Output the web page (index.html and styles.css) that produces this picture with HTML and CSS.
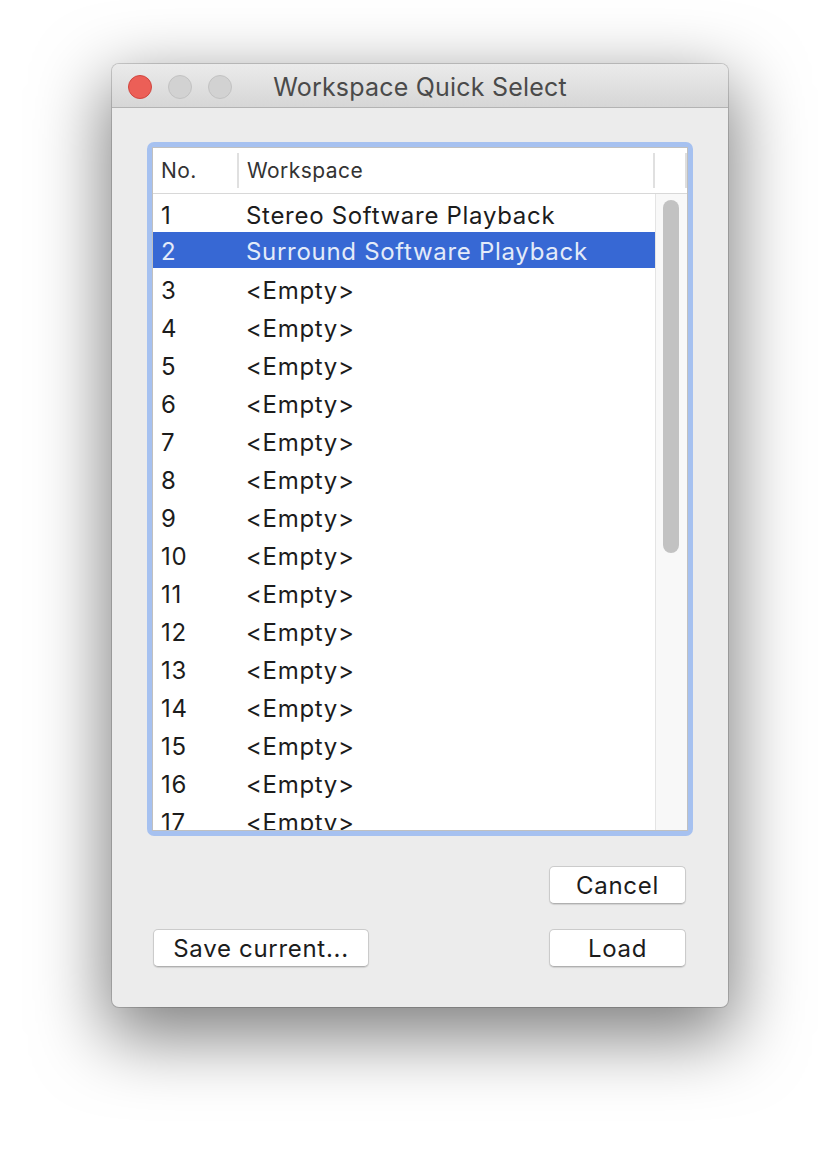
FILE: index.html
```html
<!DOCTYPE html>
<html>
<head>
<meta charset="utf-8">
<link rel="stylesheet" href="styles.css">
</head>
<body>
<div class="stage">
  <div class="window">
    <div class="titlebar">
      <div class="lights">
        <span class="light red"></span>
        <span class="light gray"></span>
        <span class="light gray"></span>
      </div>
      <div class="title">Workspace Quick Select</div>
    </div>
    <div class="content">
      <div class="listbox">
        <div class="listinner">
          <div class="header">
            <div class="hcell hno">No.</div>
            <div class="hcell hws">Workspace</div>
            <div class="hcell hcorner"></div>
          </div>
          <div class="body">
            <div class="rows">
              <div class="row first"><span class="cno">1</span><span class="cws">Stereo Software Playback</span></div>
              <div class="row sel"><span class="cno">2</span><span class="cws">Surround Software Playback</span></div>
              <div class="row"><span class="cno">3</span><span class="cws">&lt;Empty&gt;</span></div>
              <div class="row"><span class="cno">4</span><span class="cws">&lt;Empty&gt;</span></div>
              <div class="row"><span class="cno">5</span><span class="cws">&lt;Empty&gt;</span></div>
              <div class="row"><span class="cno">6</span><span class="cws">&lt;Empty&gt;</span></div>
              <div class="row"><span class="cno">7</span><span class="cws">&lt;Empty&gt;</span></div>
              <div class="row"><span class="cno">8</span><span class="cws">&lt;Empty&gt;</span></div>
              <div class="row"><span class="cno">9</span><span class="cws">&lt;Empty&gt;</span></div>
              <div class="row"><span class="cno">10</span><span class="cws">&lt;Empty&gt;</span></div>
              <div class="row"><span class="cno">11</span><span class="cws">&lt;Empty&gt;</span></div>
              <div class="row"><span class="cno">12</span><span class="cws">&lt;Empty&gt;</span></div>
              <div class="row"><span class="cno">13</span><span class="cws">&lt;Empty&gt;</span></div>
              <div class="row"><span class="cno">14</span><span class="cws">&lt;Empty&gt;</span></div>
              <div class="row"><span class="cno">15</span><span class="cws">&lt;Empty&gt;</span></div>
              <div class="row"><span class="cno">16</span><span class="cws">&lt;Empty&gt;</span></div>
              <div class="row"><span class="cno">17</span><span class="cws">&lt;Empty&gt;</span></div>
              <div class="row"><span class="cno">18</span><span class="cws">&lt;Empty&gt;</span></div>
            </div>
            <div class="scrollbar"><div class="thumb"></div></div>
          </div>
        </div>
      </div>
      <div class="buttons">
        <div class="btnrow end">
          <button class="btn small">Cancel</button>
        </div>
        <div class="btnrow between">
          <button class="btn wide">Save current...</button>
          <button class="btn small">Load</button>
        </div>
      </div>
    </div>
  </div>
</div>
</body>
</html>
```

FILE: styles.css
```css
html, body {
  margin: 0;
  padding: 0;
  background: #ffffff;
}
body {
  width: 840px;
  height: 1168px;
  overflow: hidden;
  font-family: Inter, "Noto Sans", sans-serif;
}
.stage {
  padding: 64px 0 0 112px;
}
.window {
  width: 616px;
  height: 943px;
  background: #ececec;
  border-radius: 7px;
  box-shadow: 0 0 0 1px rgba(0,0,0,0.16), 0 24px 70px 6px rgba(0,0,0,0.5);
  display: flex;
  flex-direction: column;
  overflow: hidden;
}
.titlebar {
  height: 43px;
  flex: none;
  background: linear-gradient(#ebebeb, #d6d6d6);
  border-bottom: 1px solid #b3b3b3;
  position: relative;
  display: flex;
  align-items: center;
  justify-content: center;
}
.lights {
  position: absolute;
  left: 16px;
  top: 11px;
  display: flex;
  gap: 16px;
}
.light {
  width: 24px;
  height: 24px;
  border-radius: 50%;
  box-sizing: border-box;
}
.light.red {
  background: #ec5f57;
  border: 1px solid #d0463f;
}
.light.gray {
  background: #d2d2d2;
  border: 1px solid #c2c2c2;
}
.title {
  font-size: 25px;
  color: #4a4a4a;
  letter-spacing: 0.2px;
  margin-top: 2px;
}
.content {
  flex: 1;
  padding: 34px 35px 39px 35px;
  display: flex;
  flex-direction: column;
}
.listbox {
  height: 694px;
  flex: none;
  box-sizing: border-box;
  border: 5px solid #a6c1f0;
  border-radius: 7px;
  background: #a6c1f0;
}
.listinner {
  height: 100%;
  box-sizing: border-box;
  border: 1px solid #c0c0c0;
  background: #ffffff;
  display: flex;
  flex-direction: column;
  overflow: hidden;
}
.header {
  height: 45px;
  flex: none;
  border-bottom: 1px solid #d8d8d8;
  display: flex;
  align-items: center;
  font-size: 21px;
  letter-spacing: 0.45px;
  color: #333333;
}
.hcell {
  height: 35px;
  display: flex;
  align-items: center;
  box-sizing: border-box;
}
.hno {
  width: 86px;
  padding-left: 8px;
  border-right: 2px solid #e0e0e0;
}
.hcell.hws {
  width: 416px;
  padding-left: 8px;
  border-right: 2px solid #e0e0e0;
}
.hcorner {
  flex: 1;
  border-right: 2px solid #dedede;
}
.body {
  flex: 1;
  display: flex;
  overflow: hidden;
}
.rows {
  width: 502px;
  flex: none;
}
.row {
  height: 38px;
  box-sizing: border-box;
  padding-top: 3px;
  display: flex;
  align-items: center;
  font-size: 24px;
  letter-spacing: 0.7px;
  color: #1c1c1c;
  white-space: nowrap;
}
.row.first {
  padding-top: 4px;
}
.row.sel {
  background: #3768d4;
  color: #e3ebf9;
  height: 36px;
  margin-bottom: 2px;
  padding-top: 3px;
}
.cno {
  width: 86px;
  padding-left: 8px;
  box-sizing: border-box;
}
.cws {
  padding-left: 7px;
}
.scrollbar {
  flex: 1;
  background: #f8f8f8;
  border-left: 1px solid #e4e4e4;
  padding: 6px 0 0 7px;
}
.thumb {
  width: 16px;
  height: 353px;
  border-radius: 8px;
  background: #c2c2c2;
}
.buttons {
  margin-top: 30px;
  padding: 0 7px 0 6px;
  display: flex;
  flex-direction: column;
  gap: 25px;
}
.btnrow {
  display: flex;
}
.btnrow.end {
  justify-content: flex-end;
}
.btnrow.between {
  justify-content: space-between;
}
.btn {
  height: 38px;
  background: #ffffff;
  border: 1px solid #cbcbcb;
  border-bottom-color: #b0b0b0;
  border-radius: 5px;
  box-shadow: 0 1px 1px rgba(0,0,0,0.12);
  font-family: Inter, "Noto Sans", sans-serif;
  font-size: 24px;
  letter-spacing: 0.7px;
  color: #1c1c1c;
  padding: 0;
  margin: 0;
}
.btn.small {
  width: 137px;
}
.btn.wide {
  width: 216px;
}
```
